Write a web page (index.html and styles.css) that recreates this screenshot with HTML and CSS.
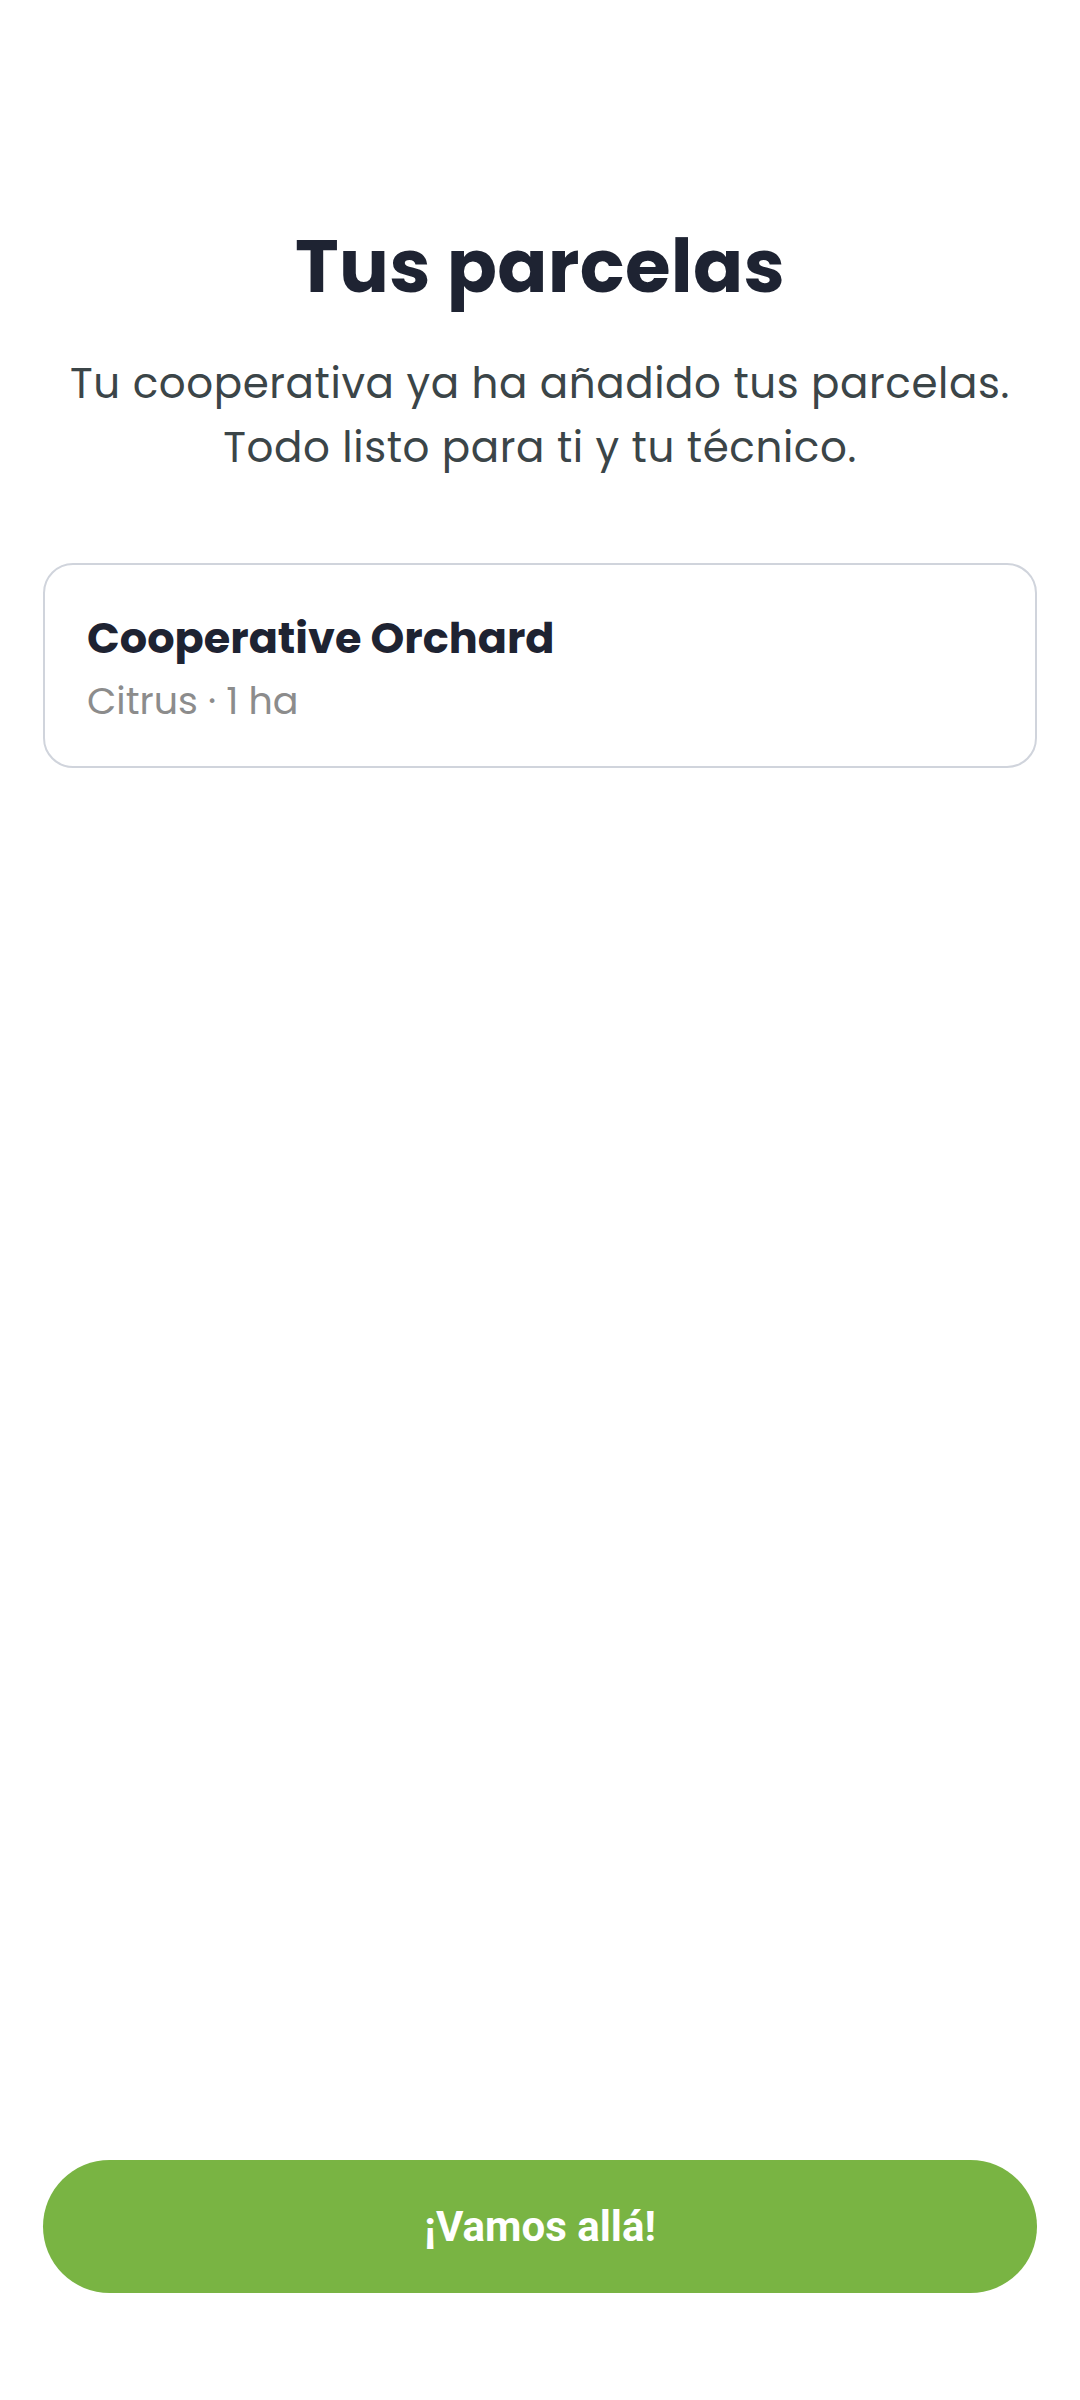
FILE: index.html
```
<!DOCTYPE html>
<html lang="es">
<head>
<meta charset="utf-8">
<title>Tus parcelas</title>
<link rel="stylesheet" href="styles.css">
</head>
<body>
<div class="screen">
  <h1 class="title">Tus parcelas</h1>
  <p class="subtitle">Tu cooperativa ya ha añadido tus parcelas.<br>Todo listo para ti y tu técnico.</p>
  <div class="card">
    <div class="card-name">Cooperative Orchard</div>
    <div class="card-meta">Citrus · 1 ha</div>
  </div>
  <button class="cta">¡Vamos allá!</button>
</div>
</body>
</html>
```
FILE: styles.css
```
html, body {
  margin: 0;
  padding: 0;
  background: #ffffff;
}
.screen {
  box-sizing: border-box;
  height: 2400px;
  width: 1080px;
  display: flex;
  flex-direction: column;
  padding: 218px 43px 107px;
  font-family: Poppins, "Inter", "Noto Sans", sans-serif;
}
.title {
  margin: 0;
  text-align: center;
  font-size: 74px;
  line-height: 96px;
  font-weight: 700;
  color: #1e2332;
  letter-spacing: 0.3px;
}
.subtitle {
  margin: 38px 0 0;
  text-align: center;
  font-size: 42px;
  line-height: 64px;
  font-weight: 400;
  color: #3b4548;
  letter-spacing: 0.6px;
}
.card {
  margin-top: 83px;
  box-sizing: border-box;
  height: 205px;
  border: 2.5px solid #d0d4dc;
  border-radius: 30px;
  padding: 43px 42px 40px;
  display: flex;
  flex-direction: column;
  gap: 6px;
}
.card-name {
  font-size: 43px;
  line-height: 60px;
  font-weight: 700;
  color: #1e2332;
}
.card-meta {
  font-size: 38px;
  line-height: 54px;
  color: #8c8c8c;
}
.cta {
  margin-top: auto;
  height: 133px;
  border: none;
  border-radius: 67px;
  background: #79b443;
  color: #ffffff;
  font-family: Roboto, sans-serif;
  font-weight: 700;
  font-size: 42px;
}
```
